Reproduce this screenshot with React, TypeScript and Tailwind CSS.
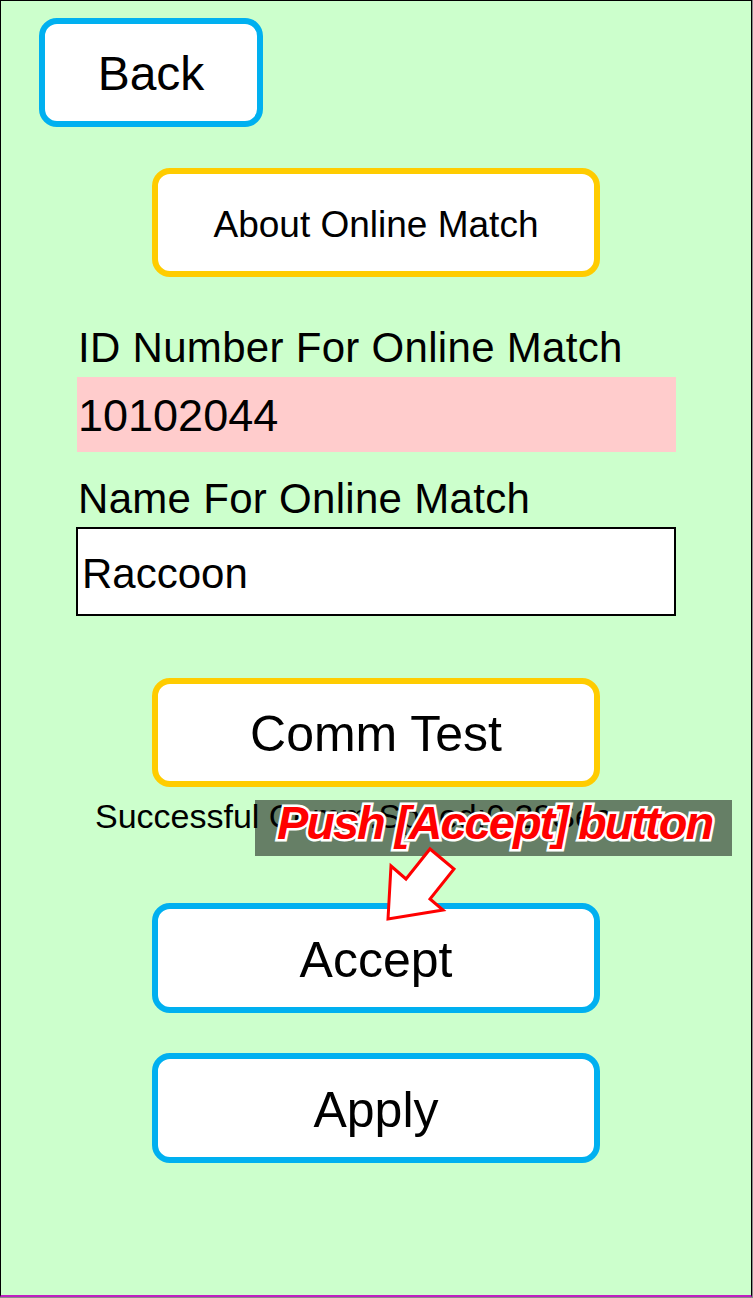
import React from "react";

const font = { fontFamily: '"Liberation Sans", Arial, sans-serif' };

function Btn({
  children,
  color,
  className,
  textClass,
}: {
  children: React.ReactNode;
  color: "blue" | "yellow";
  className: string;
  textClass: string;
}) {
  return (
    <div
      className={`${className} flex items-center justify-center rounded-[18px] border-[6px] bg-white ${
        color === "blue" ? "border-[#00b0f0]" : "border-[#ffcc00]"
      }`}
    >
      <span className={`${textClass} pt-[3px] leading-none text-black`}>{children}</span>
    </div>
  );
}

export default function App() {
  return (
    <div className="w-[753px] h-[1298px] bg-[#8a8a8a]" style={font}>
      <div className="relative w-[752px] h-[1297px] border-l border-t border-r border-black border-b-2 border-b-[#c020c0] bg-[#ccffcc] flex flex-col overflow-hidden">
        <Btn color="blue" className="mt-[17px] ml-[38px] w-[224px] h-[109px]" textClass="text-[48px]">
          Back
        </Btn>
        <Btn color="yellow" className="mt-[41px] ml-[151px] w-[448px] h-[109px]" textClass="text-[37px]">
          About Online Match
        </Btn>
        <div className="mt-[50px] ml-[77px] text-[42px] leading-[42px] tracking-[0.3px] text-black">
          ID Number For Online Match
        </div>
        <div className="mt-[8px] ml-[76px] w-[599px] h-[75px] bg-[#ffcccc] flex items-center">
          <span className="ml-[1px] pt-[2px] text-[45px] leading-none text-black">10102044</span>
        </div>
        <div className="mt-[26px] ml-[77px] text-[42px] leading-[42px] tracking-[0.3px] text-black">
          Name For Online Match
        </div>
        <div className="mt-[7px] ml-[75px] w-[600px] h-[89px] border-2 border-black bg-white flex items-center">
          <span className="pl-[4px] pt-[4px] text-[42px] leading-none text-black">Raccoon</span>
        </div>
        <Btn color="yellow" className="mt-[62px] ml-[151px] w-[448px] h-[109px]" textClass="text-[50px]">
          Comm Test
        </Btn>
        <div className="mt-[12px] ml-[94px] text-[34px] leading-[34px] text-black whitespace-nowrap">
          Successful Comm,Speed:0.28Sec
        </div>
        <Btn color="blue" className="mt-[70px] ml-[151px] w-[448px] h-[110px]" textClass="text-[50px]">
          Accept
        </Btn>
        <Btn color="blue" className="mt-[40px] ml-[151px] w-[448px] h-[110px]" textClass="text-[50px]">
          Apply
        </Btn>

        {/* annotation overlay */}
        <div className="absolute left-[254px] top-[799px] w-[477px] h-[56px] bg-black/50 flex items-start justify-center">
          <span
            className="mt-[-1px] ml-[2px] text-[47px] leading-none font-bold italic text-[#ff0000] tracking-[-2px] whitespace-nowrap [paint-order:stroke_fill] [-webkit-text-stroke:5px_white]"
            style={{ fontFamily: '"Liberation Sans", Arial, sans-serif' }}
          >
            Push [Accept] button
          </span>
        </div>
        <svg className="absolute left-0 top-0" width="753" height="1298" viewBox="0 0 753 1298">
          <polygon
            points="387,918 390,865 405,878 429,848 453,868 429,898 442,909"
            fill="white"
            stroke="#ff0000"
            strokeWidth="3"
            strokeLinejoin="miter"
          />
        </svg>
      </div>
    </div>
  );
}
